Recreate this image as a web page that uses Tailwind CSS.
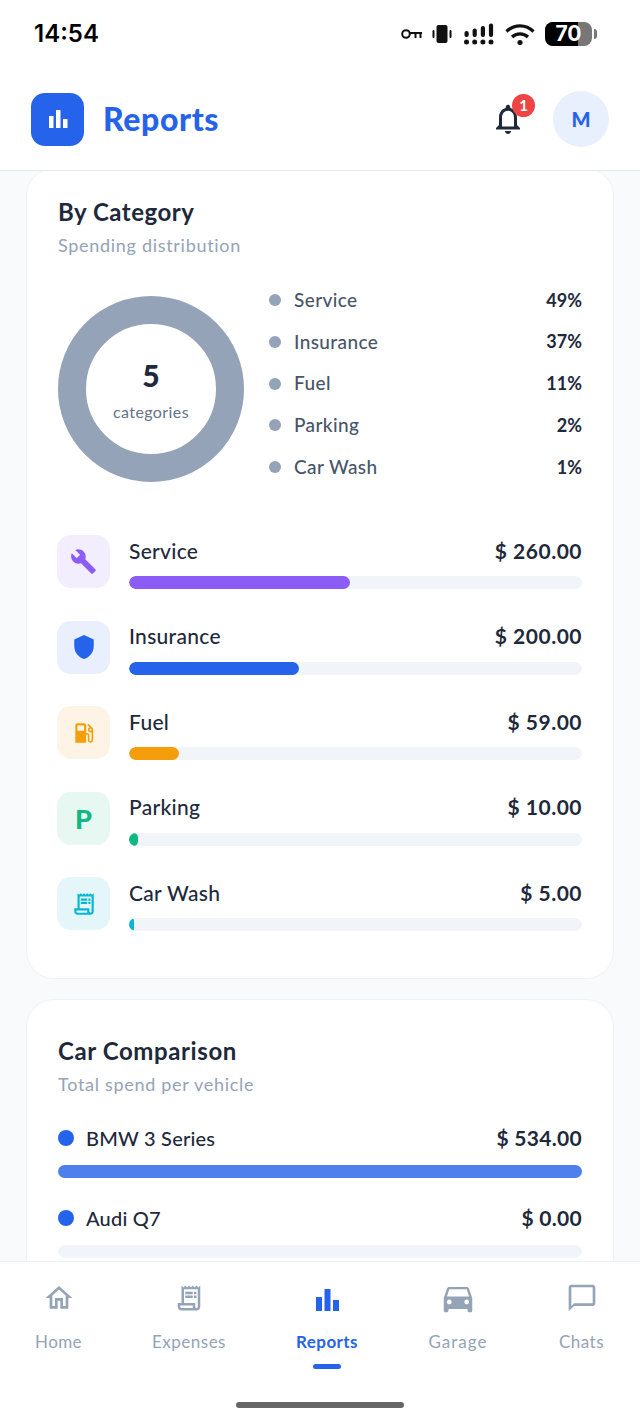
<!DOCTYPE html>
<html lang="en">
<head>
    <meta charset="UTF-8">
    <meta name="viewport" content="width=device-width, initial-scale=1.0">
    <title>Reports</title>
    <script src="https://cdn.jsdelivr.net/npm/@tailwindcss/browser@4"></script>
</head>
<body class="bg-white font-['Lato','Liberation_Sans',sans-serif]">
    <div class="flex flex-col h-[1423px] w-[640px] overflow-hidden bg-[#f8fafc]">

        <!-- Status bar -->
        <div class="h-[70px] shrink-0 bg-white flex items-start justify-between pt-[19px] pl-[34px] pr-[43px]">
            <span class="text-[24px] leading-[30px] font-semibold text-black font-['Inter',sans-serif]">14:54</span>
            <div class="flex items-center h-[30px]">
                <svg class="w-[22px] h-[12px]" viewBox="0 0 22 12" fill="none" stroke="#111" stroke-width="2"><circle cx="5" cy="6" r="3.800"/><path d="M9 5h12M14.500 5v5M19.500 5v5"/></svg>
                <svg class="w-[20px] h-[20px] ml-[9px]" viewBox="0 0 20 20" fill="#111"><rect x="4.500" y="1" width="11" height="18" rx="2"/><rect x="0.500" y="6" width="2" height="8" rx="1"/><rect x="17.500" y="6" width="2" height="8" rx="1"/></svg>
                <svg class="w-[30px] h-[22px] ml-[12px]" viewBox="0 0 30 22" fill="#111"><circle cx="2.500" cy="19" r="2.500"/><circle cx="10.700" cy="19" r="2.500"/><circle cx="18.900" cy="19" r="2.500"/><circle cx="27" cy="19" r="2.500"/><rect x="0.500" y="8" width="4.200" height="6" rx="2"/><rect x="8.600" y="5.500" width="4.200" height="8.500" rx="2"/><rect x="16.800" y="3" width="4.200" height="11" rx="2"/><rect x="24.900" y="0.500" width="4.200" height="13.500" rx="2"/></svg>
                <svg class="w-[30px] h-[22px] ml-[11px]" viewBox="0 0 30 22" fill="none" stroke="#111" stroke-width="3.200" stroke-linecap="butt"><path d="M1.500 8.500C9 1 21 1 28.500 8.500"/><path d="M7 14c4.500-4.300 11.500-4.300 16 0"/><circle cx="15" cy="19.500" r="2.600" fill="#111" stroke="none"/></svg>
                <div class="relative flex items-center ml-[10px]">
                    <div class="relative w-[47px] h-[24px] rounded-[8px] bg-[#777] overflow-hidden flex items-center justify-center">
                        <div class="absolute left-0 top-0 bottom-0 w-[33px] bg-black"></div>
                        <span class="relative text-white text-[21px] leading-[24px] font-bold font-['Inter',sans-serif]">70</span>
                    </div>
                    <div class="w-[3px] h-[10px] ml-[2px] rounded-r-sm bg-[#777]"></div>
                </div>
            </div>
        </div>

        <!-- Header -->
        <header class="relative z-10 h-[101px] shrink-0 bg-white border-b border-[#e2e8f0] flex items-center justify-between pl-[31px] pr-[31px] pb-[2px]">
            <div class="flex items-center gap-[19px]">
                <div class="w-[53px] h-[53px] rounded-[14px] bg-[#2563eb] flex items-center justify-center">
                    <svg class="w-[20px] h-[20px]" viewBox="0 0 20 20" fill="#fff"><rect x="1" y="7" width="4.500" height="12"/><rect x="8" y="1" width="4.500" height="18"/><rect x="15" y="10" width="4.500" height="9"/></svg>
                </div>
                <h1 class="text-[32px] leading-none font-black text-[#2563eb] tracking-[0.6px]">Reports</h1>
            </div>
            <div class="flex items-center gap-[17px]">
                <div class="relative w-[46px] h-[46px] flex items-center justify-center">
                    <svg class="w-[36px] h-[36px] mt-[-1px] -ml-[11px]" viewBox="0 0 24 24" fill="#1e293b"><path d="M12 22c1.100 0 2-.9 2-2h-4c0 1.100.9 2 2 2zm6-6v-5c0-3.070-1.630-5.640-4.500-6.320V4c0-.83-.67-1.500-1.500-1.500s-1.500.67-1.500 1.500v.68C7.640 5.360 6 7.920 6 11v5l-2 2v1h16v-1l-2-2zm-2 1H8v-6c0-2.480 1.510-4.500 4-4.500s4 2.020 4 4.500v6z"/></svg>
                    <span class="absolute top-[-2px] right-[1px] w-[23px] h-[23px] rounded-full bg-[#ef4444] text-white text-[15px] font-bold leading-[23px] text-center">1</span>
                </div>
                <div class="w-[56px] h-[56px] rounded-full bg-[#e8effd] flex items-center justify-center text-[#2563eb] text-[20px] font-black">M</div>
            </div>
        </header>

        <!-- Scrolling content -->
        <main class="flex-1 min-h-0 overflow-hidden px-[26px] flex flex-col gap-[20px]">
            <section class="shrink-0 -mt-[3px] h-[811px] bg-white border border-[#eef2f7] rounded-[28px] pt-[28px] px-[31px]">
                <h2 class="text-[24px] leading-[30px] font-bold text-[#1e293b] tracking-[0.5px]">By Category</h2>
                <p class="mt-[3px] text-[18px] leading-[30px] text-[#94a3b8] tracking-[0.7px]">Spending distribution</p>

                <div class="mt-[27px] flex items-start">
                    <div class="w-[186px] h-[186px] rounded-full border-[28px] border-[#94a3b8] flex flex-col items-center justify-center shrink-0 mt-[9px]">
                        <span class="mt-[1px] text-[30px] leading-[34px] font-black text-[#1e293b]">5</span>
                        <span class="mt-[10px] text-[16px] leading-[20px] text-[#64748b] tracking-[0.4px]">categories</span>
                    </div>
                    <div class="ml-[25px] flex-1 flex flex-col gap-[11.75px] -mt-[2px]">
                        <div class="flex items-center h-[30px]"><span class="w-[12px] h-[12px] rounded-full bg-[#94a3b8] mr-[13px]"></span><span class="flex-1 text-[19px] text-[#475569] font-medium tracking-[0.4px]">Service</span><span class="text-[18px] font-bold text-[#1e293b]">49%</span></div>
                        <div class="flex items-center h-[30px]"><span class="w-[12px] h-[12px] rounded-full bg-[#94a3b8] mr-[13px]"></span><span class="flex-1 text-[19px] text-[#475569] font-medium tracking-[0.4px]">Insurance</span><span class="text-[18px] font-bold text-[#1e293b]">37%</span></div>
                        <div class="flex items-center h-[30px]"><span class="w-[12px] h-[12px] rounded-full bg-[#94a3b8] mr-[13px]"></span><span class="flex-1 text-[19px] text-[#475569] font-medium tracking-[0.4px]">Fuel</span><span class="text-[18px] font-bold text-[#1e293b]">11%</span></div>
                        <div class="flex items-center h-[30px]"><span class="w-[12px] h-[12px] rounded-full bg-[#94a3b8] mr-[13px]"></span><span class="flex-1 text-[19px] text-[#475569] font-medium tracking-[0.4px]">Parking</span><span class="text-[18px] font-bold text-[#1e293b]">2%</span></div>
                        <div class="flex items-center h-[30px]"><span class="w-[12px] h-[12px] rounded-full bg-[#94a3b8] mr-[13px]"></span><span class="flex-1 text-[19px] text-[#475569] font-medium tracking-[0.4px]">Car Wash</span><span class="text-[18px] font-bold text-[#1e293b]">1%</span></div>
                    </div>
                </div>

                <div class="mt-[53px] -ml-px flex flex-col gap-[32.5px]">
                    <div class="flex gap-[19px] h-[53px]">
                        <div class="w-[53px] h-[53px] rounded-[14px] bg-[#f3eefe] flex items-center justify-center shrink-0">
                            <svg class="w-[27px] h-[27px]" viewBox="0 0 24 24" fill="#8b5cf6"><path d="M22.700 19l-9.100-9.100c.9-2.300.4-5-1.500-6.900-2-2-5-2.400-7.400-1.300L9 6 6 9 1.600 4.700C.4 7.100.9 10.100 2.900 12.100c1.900 1.900 4.600 2.400 6.900 1.500l9.100 9.100c.4.4 1 .4 1.400 0l2.300-2.300c.5-.4.5-1.100.1-1.400z"/></svg>
                        </div>
                        <div class="flex-1 min-w-0">
                            <div class="flex justify-between items-center h-[31px]"><span class="text-[21px] font-medium text-[#1e293b] tracking-[0.3px]">Service</span><span class="text-[21px] font-bold text-[#1e293b] tracking-[0.5px]">$ 260.00</span></div>
                            <div class="mt-[10px] h-[13px] rounded-full bg-[#f1f5f9] overflow-hidden"><div class="h-full rounded-full bg-[#8b5cf6]" style="width: 48.8%"></div></div>
                        </div>
                    </div>
                    <div class="flex gap-[19px] h-[53px]">
                        <div class="w-[53px] h-[53px] rounded-[14px] bg-[#e9effc] flex items-center justify-center shrink-0">
                            <svg class="w-[26px] h-[26px]" viewBox="0 0 24 24" fill="#2563eb"><path d="M12 1L3 5v6c0 5.550 3.840 10.740 9 12 5.160-1.260 9-6.450 9-12V5l-9-4z"/></svg>
                        </div>
                        <div class="flex-1 min-w-0">
                            <div class="flex justify-between items-center h-[31px]"><span class="text-[21px] font-medium text-[#1e293b] tracking-[0.3px]">Insurance</span><span class="text-[21px] font-bold text-[#1e293b] tracking-[0.5px]">$ 200.00</span></div>
                            <div class="mt-[10px] h-[13px] rounded-full bg-[#f1f5f9] overflow-hidden"><div class="h-full rounded-full bg-[#2563eb]" style="width: 37.5%"></div></div>
                        </div>
                    </div>
                    <div class="flex gap-[19px] h-[53px]">
                        <div class="w-[53px] h-[53px] rounded-[14px] bg-[#fef4e6] flex items-center justify-center shrink-0">
                            <svg class="w-[26px] h-[26px]" viewBox="0 0 24 24" fill="#f59e0b"><path d="M19.770 7.230l.01-.01-3.720-3.720L15 4.560l2.110 2.110c-.94.36-1.610 1.260-1.610 2.330 0 1.380 1.120 2.500 2.500 2.500.36 0 .69-.08 1-.21v7.210c0 .55-.45 1-1 1s-1-.45-1-1V14c0-1.100-.9-2-2-2h-1V5c0-1.100-.9-2-2-2H6c-1.100 0-2 .9-2 2v16h10v-7.500h1.500v5c0 1.380 1.120 2.500 2.500 2.500s2.500-1.120 2.500-2.500V9c0-.69-.28-1.320-.73-1.770zM12 10H6V5h6v5zm6 0c-.55 0-1-.45-1-1s.45-1 1-1 1 .45 1 1-.45 1-1 1z"/></svg>
                        </div>
                        <div class="flex-1 min-w-0">
                            <div class="flex justify-between items-center h-[31px]"><span class="text-[21px] font-medium text-[#1e293b] tracking-[0.3px]">Fuel</span><span class="text-[21px] font-bold text-[#1e293b] tracking-[0.5px]">$ 59.00</span></div>
                            <div class="mt-[10px] h-[13px] rounded-full bg-[#f1f5f9] overflow-hidden"><div class="h-full rounded-full bg-[#f59e0b]" style="width: 11%"></div></div>
                        </div>
                    </div>
                    <div class="flex gap-[19px] h-[53px]">
                        <div class="w-[53px] h-[53px] rounded-[14px] bg-[#e7f7f1] flex items-center justify-center shrink-0">
                            <span class="text-[27px] leading-none font-black text-[#10b981]">P</span>
                        </div>
                        <div class="flex-1 min-w-0">
                            <div class="flex justify-between items-center h-[31px]"><span class="text-[21px] font-medium text-[#1e293b] tracking-[0.3px]">Parking</span><span class="text-[21px] font-bold text-[#1e293b] tracking-[0.5px]">$ 10.00</span></div>
                            <div class="mt-[10px] h-[13px] rounded-full bg-[#f1f5f9] overflow-hidden"><div class="h-full rounded-full bg-[#10b981]" style="width: 2%"></div></div>
                        </div>
                    </div>
                    <div class="flex gap-[19px] h-[53px]">
                        <div class="w-[53px] h-[53px] rounded-[14px] bg-[#e5f6fb] flex items-center justify-center shrink-0">
                            <svg class="w-[26px] h-[26px]" viewBox="0 0 24 24" fill="#06b6d4"><path d="M19.500 3.500 18 2l-1.500 1.500L15 2l-1.500 1.500L12 2l-1.500 1.500L9 2 7.500 3.500 6 2v14H3v3c0 1.660 1.340 3 3 3h12c1.660 0 3-1.340 3-3V2l-1.500 1.500zM15 20H6c-.55 0-1-.45-1-1v-1h10v2zm4-1c0 .55-.45 1-1 1s-1-.45-1-1v-3H8V5h11v14z"/><path d="M9 7h6v2H9zm7 0h2v2h-2zm-7 3h6v2H9zm7 0h2v2h-2z"/></svg>
                        </div>
                        <div class="flex-1 min-w-0">
                            <div class="flex justify-between items-center h-[31px]"><span class="text-[21px] font-medium text-[#1e293b] tracking-[0.3px]">Car Wash</span><span class="text-[21px] font-bold text-[#1e293b] tracking-[0.5px]">$ 5.00</span></div>
                            <div class="mt-[10px] h-[13px] rounded-full bg-[#f1f5f9] overflow-hidden"><div class="h-full rounded-full bg-[#06b6d4]" style="width: 1%"></div></div>
                        </div>
                    </div>
                </div>
            </section>

            <section class="shrink-0 bg-white border border-[#eef2f7] rounded-[28px] pt-[36px] px-[31px] pb-[30px]">
                <h2 class="text-[24px] leading-[30px] font-bold text-[#1e293b] tracking-[0.6px]">Car Comparison</h2>
                <p class="mt-[3px] text-[18px] leading-[30px] text-[#94a3b8] tracking-[0.7px]">Total spend per vehicle</p>
                <div class="mt-[24px]">
                    <div class="flex items-center h-[30px]"><span class="w-[16px] h-[16px] rounded-full bg-[#2563eb] mr-[12px]"></span><span class="flex-1 text-[20px] font-medium text-[#1e293b] tracking-[0.2px]">BMW 3 Series</span><span class="text-[21px] font-bold text-[#1e293b] tracking-[0.3px]">$ 534.00</span></div>
                    <div class="mt-[12px] h-[13px] rounded-full bg-[#4f7fea]"></div>
                </div>
                <div class="mt-[25px]">
                    <div class="flex items-center h-[30px]"><span class="w-[16px] h-[16px] rounded-full bg-[#2563eb] mr-[12px]"></span><span class="flex-1 text-[20px] font-medium text-[#1e293b] tracking-[0.2px]">Audi Q7</span><span class="text-[21px] font-bold text-[#1e293b] tracking-[0.3px]">$ 0.00</span></div>
                    <div class="mt-[12px] h-[13px] rounded-full bg-[#f1f5f9]"></div>
                </div>
            </section>
        </main>

        <!-- Bottom nav -->
        <nav class="relative h-[162px] shrink-0 bg-white border-t border-[#eef2f7] flex items-start pt-[20px]">
            <a class="absolute left-[0px] w-[117px] flex flex-col items-center">
                <svg class="w-[32px] h-[32px]" viewBox="0 0 24 24" fill="#94a3b8"><path d="M12 5.690l5 4.500V18h-2v-6H9v6H7v-7.810l5-4.500M12 3L2 12h3v8h6v-6h2v6h6v-8h3L12 3z"/></svg>
                <span class="mt-[16px] text-[17px] leading-[24px] text-[#94a3b8] tracking-[0.4px]">Home</span>
            </a>
            <a class="absolute left-[130px] w-[118px] flex flex-col items-center">
                <svg class="w-[30px] h-[30px] mt-px mb-px" viewBox="0 0 24 24" fill="#94a3b8"><path d="M19.500 3.500 18 2l-1.500 1.500L15 2l-1.500 1.500L12 2l-1.500 1.500L9 2 7.500 3.500 6 2v14H3v3c0 1.660 1.340 3 3 3h12c1.660 0 3-1.340 3-3V2l-1.500 1.500zM15 20H6c-.55 0-1-.45-1-1v-1h10v2zm4-1c0 .55-.45 1-1 1s-1-.45-1-1v-3H8V5h11v14z"/><path d="M9 7h6v2H9zm7 0h2v2h-2zm-7 3h6v2H9zm7 0h2v2h-2z"/></svg>
                <span class="mt-[16px] text-[17px] leading-[24px] text-[#94a3b8] tracking-[0.5px]">Expenses</span>
            </a>
            <a class="absolute left-[268px] w-[118px] flex flex-col items-center">
                <svg class="w-[23px] h-[22px] mt-[7px] mb-[3px]" viewBox="0 0 23 22" fill="#2563eb"><rect x="0" y="8" width="6" height="14"/><rect x="8.500" y="0" width="6" height="22"/><rect x="17" y="11" width="6" height="11"/></svg>
                <span class="mt-[16px] text-[17px] leading-[24px] font-bold text-[#2563eb] tracking-[0.4px]">Reports</span>
                <span class="mt-[10px] w-[28px] h-[5px] rounded-full bg-[#2563eb]"></span>
            </a>
            <a class="absolute left-[399px] w-[118px] flex flex-col items-center">
                <svg class="w-[38px] h-[38px] -mt-[3px] -mb-[3px]" viewBox="0 0 24 24" fill="#94a3b8"><path d="M18.920 6.010C18.720 5.420 18.160 5 17.500 5h-11c-.66 0-1.210.42-1.420 1.010L3 12v8c0 .55.45 1 1 1h1c.55 0 1-.45 1-1v-1h12v1c0 .55.45 1 1 1h1c.55 0 1-.45 1-1v-8l-2.080-5.990zM6.500 16c-.83 0-1.500-.67-1.500-1.500S5.670 13 6.500 13s1.500.67 1.500 1.500S7.330 16 6.500 16zm11 0c-.83 0-1.500-.67-1.500-1.500s.67-1.500 1.500-1.500 1.500.67 1.500 1.500-.67 1.500-1.500 1.500zM5 11l1.500-4.500h11L19 11H5z"/></svg>
                <span class="mt-[16px] text-[17px] leading-[24px] text-[#94a3b8] tracking-[1px]">Garage</span>
            </a>
            <a class="absolute left-[523px] w-[117px] flex flex-col items-center">
                <svg class="w-[32px] h-[32px]" viewBox="0 0 24 24" fill="#94a3b8"><path d="M20 2H4c-1.100 0-2 .9-2 2v18l4-4h14c1.100 0 2-.9 2-2V4c0-1.100-.9-2-2-2zm0 14H6l-2 2V4h16v12z"/></svg>
                <span class="mt-[16px] text-[17px] leading-[24px] text-[#94a3b8] tracking-[0.5px]">Chats</span>
            </a>
            <div class="absolute left-[236px] top-[140px] w-[168px] h-[6px] rounded-full bg-[#666]"></div>
        </nav>
    </div>
</body>
</html>
